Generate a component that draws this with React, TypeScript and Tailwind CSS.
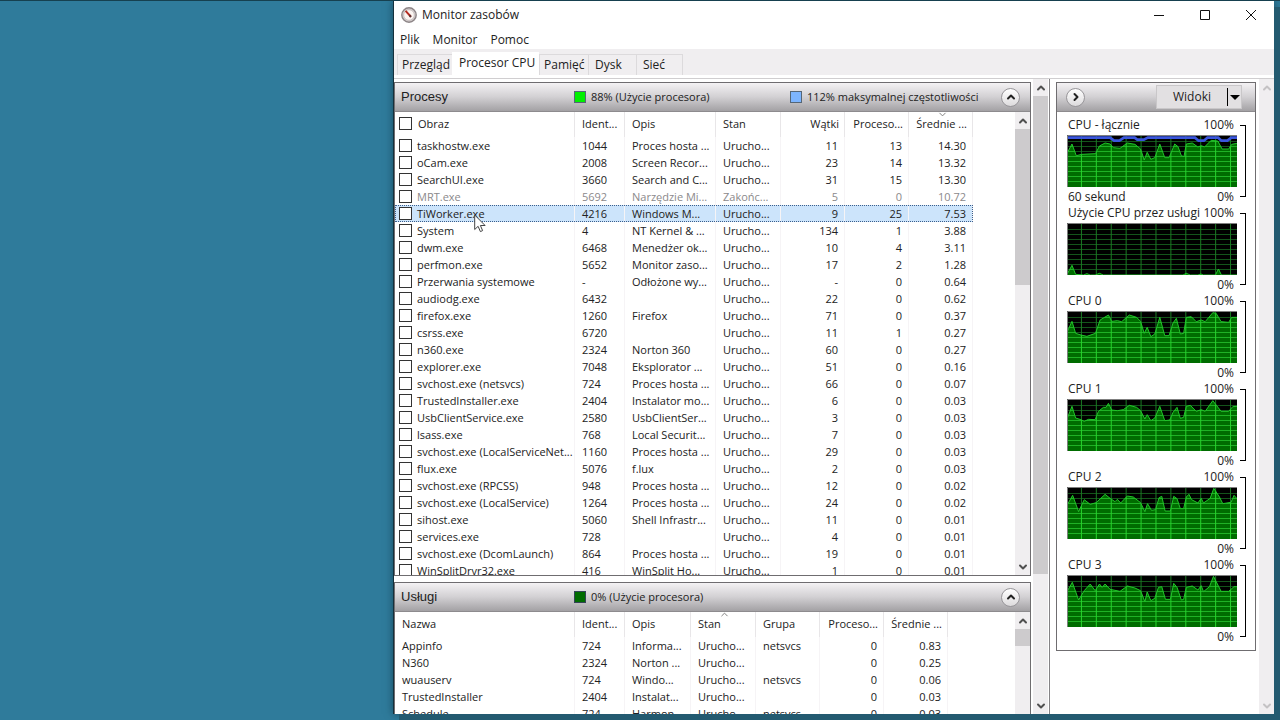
import type { ReactNode } from 'react';
import { ChevronDown, ChevronRight, ChevronUp } from 'lucide-react';

type ProcessRow = [name: string, pid: string, desc: string, state: string, threads: string, cpu: string, avg: string];

const processes: ProcessRow[] = [
  ['taskhostw.exe', '1044', 'Proces hosta ...', 'Urucho...', '11', '13', '14.30'],
  ['oCam.exe', '2008', 'Screen Recor...', 'Urucho...', '23', '14', '13.32'],
  ['SearchUI.exe', '3660', 'Search and C...', 'Urucho...', '31', '15', '13.30'],
  ['MRT.exe', '5692', 'Narzędzie Mi...', 'Zakońc...', '5', '0', '10.72'],
  ['TiWorker.exe', '4216', 'Windows M...', 'Urucho...', '9', '25', '7.53'],
  ['System', '4', 'NT Kernel & ...', 'Urucho...', '134', '1', '3.88'],
  ['dwm.exe', '6468', 'Menedżer ok...', 'Urucho...', '10', '4', '3.11'],
  ['perfmon.exe', '5652', 'Monitor zaso...', 'Urucho...', '17', '2', '1.28'],
  ['Przerwania systemowe', '-', 'Odłożone wy...', 'Urucho...', '-', '0', '0.64'],
  ['audiodg.exe', '6432', '', 'Urucho...', '22', '0', '0.62'],
  ['firefox.exe', '1260', 'Firefox', 'Urucho...', '71', '0', '0.37'],
  ['csrss.exe', '6720', '', 'Urucho...', '11', '1', '0.27'],
  ['n360.exe', '2324', 'Norton 360', 'Urucho...', '60', '0', '0.27'],
  ['explorer.exe', '7048', 'Eksplorator ...', 'Urucho...', '51', '0', '0.16'],
  ['svchost.exe (netsvcs)', '724', 'Proces hosta ...', 'Urucho...', '66', '0', '0.07'],
  ['TrustedInstaller.exe', '2404', 'Instalator mo...', 'Urucho...', '6', '0', '0.03'],
  ['UsbClientService.exe', '2580', 'UsbClientSer...', 'Urucho...', '3', '0', '0.03'],
  ['lsass.exe', '768', 'Local Securit...', 'Urucho...', '7', '0', '0.03'],
  ['svchost.exe (LocalServiceNet...', '1160', 'Proces hosta ...', 'Urucho...', '29', '0', '0.03'],
  ['flux.exe', '5076', 'f.lux', 'Urucho...', '2', '0', '0.03'],
  ['svchost.exe (RPCSS)', '948', 'Proces hosta ...', 'Urucho...', '12', '0', '0.02'],
  ['svchost.exe (LocalService)', '1264', 'Proces hosta ...', 'Urucho...', '24', '0', '0.02'],
  ['sihost.exe', '5060', 'Shell Infrastr...', 'Urucho...', '11', '0', '0.01'],
  ['services.exe', '728', '', 'Urucho...', '4', '0', '0.01'],
  ['svchost.exe (DcomLaunch)', '864', 'Proces hosta ...', 'Urucho...', '19', '0', '0.01'],
  ['WinSplitDrvr32.exe', '416', 'WinSplit Ho...', 'Urucho...', '1', '0', '0.01'],
];

const services = [
  ['Appinfo', '724', 'Informa...', 'Urucho...', 'netsvcs', '0', '0.83'],
  ['N360', '2324', 'Norton ...', 'Urucho...', '', '0', '0.25'],
  ['wuauserv', '724', 'Windo...', 'Urucho...', 'netsvcs', '0', '0.06'],
  ['TrustedInstaller', '2404', 'Instalat...', 'Urucho...', '', '0', '0.03'],
  ['Schedule', '724', 'Harmon...', 'Urucho...', 'netsvcs', '0', '0.03'],
];

// Chart samples live in a 513 x 156 space, y pointing down
const charts = [
  {
    title: 'CPU - łącznie',
    caption: '60 sekund',
    points: '0,55 15,27 28,62 45,58 86,56 98,33 115,24 130,27 140,38 160,40 182,24 205,28 222,42 233,75 242,52 253,73 265,68 280,27 295,68 308,68 325,27 335,35 345,62 353,65 360,27 378,24 395,36 405,32 415,36 435,16 455,18 468,42 488,42 497,28 513,25',
    frequency: '0,8 130,8 142,17 158,17 172,8 204,8 212,14 232,14 244,8 386,8 397,17 413,17 424,8 456,8 466,17 484,17 496,8 513,8',
  },
  {
    title: 'Użycie CPU przez usługi',
    caption: '',
    points: '0,154 15,127 26,154 50,156 60,152 70,156 85,156 98,151 110,156 350,156 360,151 372,156 395,156 404,153 412,156 448,156 457,138 466,156 513,156',
  },
  {
    title: 'CPU 0',
    caption: '',
    points: '0,64 15,31 26,67 42,72 60,76 86,67 100,27 125,12 135,31 152,29 165,32 188,12 210,19 222,31 233,67 242,49 253,77 265,69 280,19 295,74 308,74 320,36 330,22 342,69 352,67 360,19 375,17 390,32 405,27 417,32 440,5 450,7 465,32 488,34 497,19 513,19',
  },
  {
    title: 'CPU 1',
    caption: '',
    points: '0,60 15,22 26,57 42,62 52,67 65,61 85,62 95,37 110,25 118,25 125,13 135,33 152,35 170,32 188,19 210,25 222,35 235,60 242,47 253,65 265,57 280,22 295,65 310,63 320,40 332,25 342,58 352,55 360,22 372,19 390,37 405,32 417,37 440,5 465,37 488,37 500,23 513,22',
  },
  {
    title: 'CPU 2',
    caption: '',
    points: '0,55 17,25 35,74 52,38 70,52 88,47 115,22 130,34 145,44 152,37 162,48 182,27 200,30 222,47 235,74 243,50 255,70 267,68 278,32 286,28 296,72 312,72 322,28 332,35 342,65 352,65 360,30 368,22 376,38 395,48 405,34 412,48 432,34 443,4 460,30 470,50 495,46 504,25 513,35',
  },
  {
    title: 'CPU 3',
    caption: '',
    points: '0,50 16,22 35,75 52,47 70,27 85,47 98,27 106,37 115,27 130,43 160,49 182,33 205,39 222,47 235,80 242,51 253,77 265,70 276,37 286,35 297,73 312,73 322,25 332,37 345,75 352,73 360,37 378,33 395,45 405,32 412,50 430,35 442,4 465,49 488,49 504,35 513,35',
  },
];

const gridX = [43, 88, 133, 178, 223, 268, 313, 358, 403, 448, 493];
const gridY = [19, 34, 49, 64, 79, 94, 109, 124, 139];

function Grid({ vertical, horizontal }: { vertical: string; horizontal: string }) {
  return (
    <g strokeWidth="3">
      {gridY.map((y) => (
        <line key={y} x1="0" x2="513" y1={y + 0.5} y2={y + 0.5} stroke={horizontal} />
      ))}
      {gridX.map((x) => (
        <line key={x} x1={x + 0.5} x2={x + 0.5} y1="0" y2="156" stroke={vertical} />
      ))}
    </g>
  );
}

function Chart({ id, title, caption, points, frequency }: { id: string; title: string; caption: string; points: string; frequency?: string }) {
  const area = `0,156 ${points} 513,156`;
  return (
    <section className="flex h-[88px] gap-[3px] text-[12px] leading-4 text-[#222]">
      <div className="flex flex-1 flex-col justify-between">
        <div className="flex justify-between whitespace-nowrap pl-px pr-[3px]">
          <h3>{title}</h3>
          <span>100%</span>
        </div>
        <svg viewBox="0 0 513 156" preserveAspectRatio="none" className="h-[52px] w-full bg-black" role="img" aria-label={title}>
          <clipPath id={id}>
            <polygon points={area} />
          </clipPath>
          <Grid vertical="#1b7a24" horizontal="#14541b" />
          <polygon points={area} fill="#006c00" />
          <g clipPath={`url(#${id})`}>
            <Grid vertical="#27d52d" horizontal="#1fb225" />
          </g>
          <polyline points={points} fill="none" stroke="#22c52a" strokeWidth="3" />
          {frequency && <polyline points={frequency} fill="none" stroke="#3a55dc" strokeWidth="8" />}
          <path d="M1.5 156V1.5H513" fill="none" stroke="#808080" strokeWidth="3" />
        </svg>
        <div className="flex justify-between pl-px pr-[3px]">
          <span>{caption}</span>
          <span>0%</span>
        </div>
      </div>
      <div className="my-2 w-[6px] border-y border-r border-black" />
    </section>
  );
}

function Scrollbar({ thumb, disabled = false }: { thumb: string; disabled?: boolean }) {
  const arrow = disabled ? 'h-3 w-3 text-[#c4c2c4]' : 'h-3 w-3 text-[#505050]';
  return (
    <div className="flex w-[15px] shrink-0 flex-col bg-[#f0eef0]">
      <button aria-label="W górę" className="flex h-[17px] shrink-0 items-center justify-center">
        <ChevronUp className={arrow} strokeWidth={4} />
      </button>
      <div className={thumb} />
      <button aria-label="W dół" className="mt-auto flex h-[17px] shrink-0 items-center justify-center">
        <ChevronDown className={arrow} strokeWidth={4} />
      </button>
    </div>
  );
}

function RoundButton({ label, children }: { label: string; children: ReactNode }) {
  return (
    <button aria-label={label} className="flex h-[19px] w-[19px] items-center justify-center rounded-full border border-[#98969a] bg-gradient-to-b from-white to-[#dddbdd] text-[#222]">
      {children}
    </button>
  );
}

function PanelHeader({ title, children }: { title: string; children: ReactNode }) {
  return (
    <div className="flex h-[29px] shrink-0 items-center border-b border-[#8d8b8e] bg-gradient-to-b from-[#f4f2f4] via-[#d2d0d3] to-[#a3a1a4] pl-[6px] pr-[10px] text-[11px]">
      <h2 className="w-[173px] font-['Liberation_Sans',sans-serif] text-[13px] text-[#222]">{title}</h2>
      {children}
      <div className="ml-auto">
        <RoundButton label="Zwiń">
          <ChevronUp className="h-3 w-3" strokeWidth={4} />
        </RoundButton>
      </div>
    </div>
  );
}

const box = 'block h-[13px] w-[13px] shrink-0 appearance-none border border-[#333] bg-white';
const head = 'relative h-[25px] border-r border-[#e8e6e8] pb-[2px] pl-[7px] pr-[5px] font-normal';
const cell = 'h-[17px] border-r border-[#f6f4f6] py-0 pl-[7px] pr-[6px]';

function ProcessTable() {
  return (
    <table className="w-[578px] table-fixed border-separate border-spacing-0 self-start whitespace-nowrap text-left leading-[16px]">
      <colgroup>
        <col className="w-[180px]" />
        <col className="w-[50px]" />
        <col className="w-[91px]" />
        <col className="w-[65px]" />
        <col className="w-[64px]" />
        <col className="w-[64px]" />
        <col className="w-[64px]" />
      </colgroup>
      <thead>
        <tr>
          <th className="h-[25px] border-r border-[#e8e6e8] pb-[2px] pl-1 font-normal">
            <label className="flex items-center gap-[6px]">
              <input type="checkbox" className={box} />
              Obraz
            </label>
          </th>
          <th className={head}>Ident...</th>
          <th className={head}>Opis</th>
          <th className={head}>Stan</th>
          <th className={`${head} text-right`}>Wątki</th>
          <th className={`${head} text-right`}>Proceso...</th>
          <th className={`${head} text-right`}>
            <ChevronDown className="absolute left-[28px] -top-[3px] h-[11px] w-[11px] text-[#777]" />
            Średnie ...
          </th>
        </tr>
      </thead>
      <tbody>
        {processes.map(([name, pid, desc, state, threads, cpu, avg]) => (
          <tr
            key={name}
            className={
              name === 'TiWorker.exe'
                ? 'bg-[#cce4fb] outline-1 -outline-offset-1 outline-dotted outline-[#3c5f8c]'
                : name === 'MRT.exe'
                  ? 'text-[#8b898b]'
                  : ''
            }
          >
            <td className="h-[17px] border-r border-[#f6f4f6] py-0 pl-1">
              <label className="flex items-center gap-[5px]">
                <input type="checkbox" className={box} />
                {name}
              </label>
            </td>
            <td className={cell}>{pid}</td>
            <td className={cell}>{desc}</td>
            <td className={cell}>{state}</td>
            <td className={`${cell} text-right`}>{threads}</td>
            <td className={`${cell} text-right`}>{cpu}</td>
            <td className={`${cell} text-right`}>{avg}</td>
          </tr>
        ))}
      </tbody>
    </table>
  );
}

function ServiceTable() {
  return (
    <table className="w-[553px] table-fixed border-separate border-spacing-0 self-start whitespace-nowrap text-left leading-[16px]">
      <colgroup>
        <col className="w-[180px]" />
        <col className="w-[50px]" />
        <col className="w-[66px]" />
        <col className="w-[65px]" />
        <col className="w-[64px]" />
        <col className="w-[64px]" />
        <col className="w-[64px]" />
      </colgroup>
      <thead>
        <tr>
          <th className={head}>Nazwa</th>
          <th className={head}>Ident...</th>
          <th className={head}>Opis</th>
          <th className={head}>
            <ChevronUp className="absolute left-[28px] -top-[3px] h-[11px] w-[11px] text-[#777]" />
            Stan
          </th>
          <th className={head}>Grupa</th>
          <th className={`${head} text-right`}>Proceso...</th>
          <th className={`${head} text-right`}>Średnie ...</th>
        </tr>
      </thead>
      <tbody>
        {services.map((row) => (
          <tr key={row[0]}>
            {row.map((value, i) => (
              <td key={i} className={i > 4 ? `${cell} text-right` : cell}>
                {value}
              </td>
            ))}
          </tr>
        ))}
      </tbody>
    </table>
  );
}

function WindowButton({ label, path }: { label: string; path: string }) {
  return (
    <button aria-label={label} className="flex w-[46px] justify-center">
      <svg viewBox="0 0 12 12" className="h-3 w-3" fill="none" stroke="#111">
        <path d={path} />
      </svg>
    </button>
  );
}

function TitleBar() {
  return (
    <header className="flex h-[27px] shrink-0 items-center pl-[7px] text-[12px]">
      <svg viewBox="0 0 16 16" className="h-4 w-4">
        <circle cx="8" cy="8" r="7.2" fill="#d5d0d0" stroke="#8c8486" strokeWidth="1.4" />
        <circle cx="8" cy="8" r="5.3" fill="#fbf5f2" stroke="#bdb3b3" strokeWidth=".7" />
        <path d="M4.6 3.8 9.8 9.6" stroke="#b52a20" strokeWidth="2" />
        <path d="M8.4 8.2 10 10" stroke="#5a3030" strokeWidth="2" />
      </svg>
      <h1 className="ml-[5px] text-[#222]">Monitor zasobów</h1>
      <div className="ml-auto flex">
        <WindowButton label="Minimalizuj" path="M1 6.5h10" />
        <WindowButton label="Maksymalizuj" path="M1.5 1.5h9v9h-9z" />
        <WindowButton label="Zamknij" path="m1 1 10 10M11 1 1 11" />
      </div>
    </header>
  );
}

function Tabs() {
  const tab = 'h-[21px] border-l border-t border-[#dcdadc] text-left';
  return (
    <div role="tablist" className="flex h-[26px] shrink-0 items-end bg-[#f0eef0] pl-[3px] text-[12px] leading-5">
      <button role="tab" className={`${tab} w-[55px] pl-1`}>Przegląd</button>
      <button role="tab" aria-selected className="h-[23px] w-[87px] bg-white pb-[2px] pl-[7px] text-left">
        Procesor CPU
      </button>
      <button role="tab" className={`${tab} w-[49px] pl-1`}>Pamięć</button>
      <button role="tab" className={`${tab} w-[48px] pl-[6px]`}>Dysk</button>
      <button role="tab" className={`${tab} w-[47px] border-r pl-[6px]`}>Sieć</button>
    </div>
  );
}

export default function App() {
  return (
    <div className="relative h-screen overflow-hidden border-t border-[#16404f] bg-[#2f7b9b] pb-[6px] pl-[393px] pr-[6px] font-['Open_Sans','Noto_Sans',sans-serif]">
      <main className="flex h-full flex-col border-l border-[#14303c] bg-white text-[11px] text-[#222] shadow-[6px_6px_0_#235a70,0_0_8px_#1a4a5e]">
        <TitleBar />
        <nav className="flex h-[21px] shrink-0 items-end gap-[13px] pl-[6px] text-[12px]">
          <button>Plik</button>
          <button>Monitor</button>
          <button>Pomoc</button>
        </nav>
        <Tabs />
        <div className="mt-[3px] flex min-h-0 flex-1 border-t border-[#d0ced0]">
          <div className="flex min-w-0 flex-1 flex-col gap-[6px] overflow-hidden pt-[3px]">
            <section className="flex h-[494px] shrink-0 flex-col overflow-hidden border border-[#6f6d70]">
              <PanelHeader title="Procesy">
                <i className="h-3 w-3 border border-[#567] bg-[#00f000]" />
                <span className="ml-[5px] w-[199px]">88% (Użycie procesora)</span>
                <i className="h-3 w-3 border border-[#567] bg-[#7db5ff]" />
                <span className="ml-[5px]">112% maksymalnej częstotliwości</span>
              </PanelHeader>
              <div className="flex min-h-0 flex-1 justify-between overflow-hidden">
                <ProcessTable />
                <Scrollbar thumb="h-[156px] bg-[#cdcbcd]" />
              </div>
            </section>
            <section className="flex min-h-0 flex-1 flex-col overflow-hidden border border-b-0 border-[#6f6d70]">
              <PanelHeader title="Usługi">
                <i className="h-3 w-3 border border-[#345] bg-[#006c00]" />
                <span className="ml-[5px]">0% (Użycie procesora)</span>
              </PanelHeader>
              <div className="flex min-h-0 flex-1 justify-between overflow-hidden">
                <ServiceTable />
                <div className="flex h-[120px]">
                  <Scrollbar thumb="h-[17px] bg-[#cdcbcd]" />
                </div>
              </div>
            </section>
          </div>
          <div className="ml-[2px] flex border-r border-[#858386] pr-px">
            <Scrollbar thumb="h-[478px] bg-[#cdcbcd]" />
          </div>
          <aside className="flex w-[224px] shrink-0 pl-[6px]">
            <section className="mt-[3px] flex w-[200px] flex-col self-start border border-[#6f6d70] pb-[5px]">
              <div className="flex h-[29px] items-center justify-between border-b border-[#8d8b8e] bg-gradient-to-b from-[#f4f2f4] via-[#d2d0d3] to-[#a3a1a4] pl-[9px] pr-[13px]">
                <RoundButton label="Ukryj wykresy">
                  <ChevronRight className="h-3 w-3" strokeWidth={4} />
                </RoundButton>
                <button className="flex h-[24px] w-[86px] items-center border border-[#c9c7c9] bg-[#e2e0e2] text-[12px]">
                  <span className="flex-1">Widoki</span>
                  <span className="flex h-[18px] w-[14px] items-center justify-center border-l border-black">
                    <svg viewBox="0 0 10 5" className="h-[5px] w-[10px]">
                      <path d="M0 0h10L5 5z" />
                    </svg>
                  </span>
                </button>
              </div>
              <div className="pl-[10px] pr-[9px] pt-[5px]">
                {charts.map((chart, i) => (
                  <Chart key={chart.title} id={`area-${i}`} {...chart} />
                ))}
              </div>
            </section>
            <div className="ml-auto flex">
              <Scrollbar thumb="h-0" disabled />
            </div>
          </aside>
        </div>
      </main>

      {/* Mouse pointer over the selected process */}
      <svg viewBox="0 0 12 19" className="absolute left-[474px] top-[213px] h-[19px] w-3">
        <path d="M.7 1v14.5l3.4-3.2 2.3 5.3 2.2-1-2.2-5.1h4.7z" fill="#fff" stroke="#444" strokeWidth="1" />
      </svg>
    </div>
  );
}
